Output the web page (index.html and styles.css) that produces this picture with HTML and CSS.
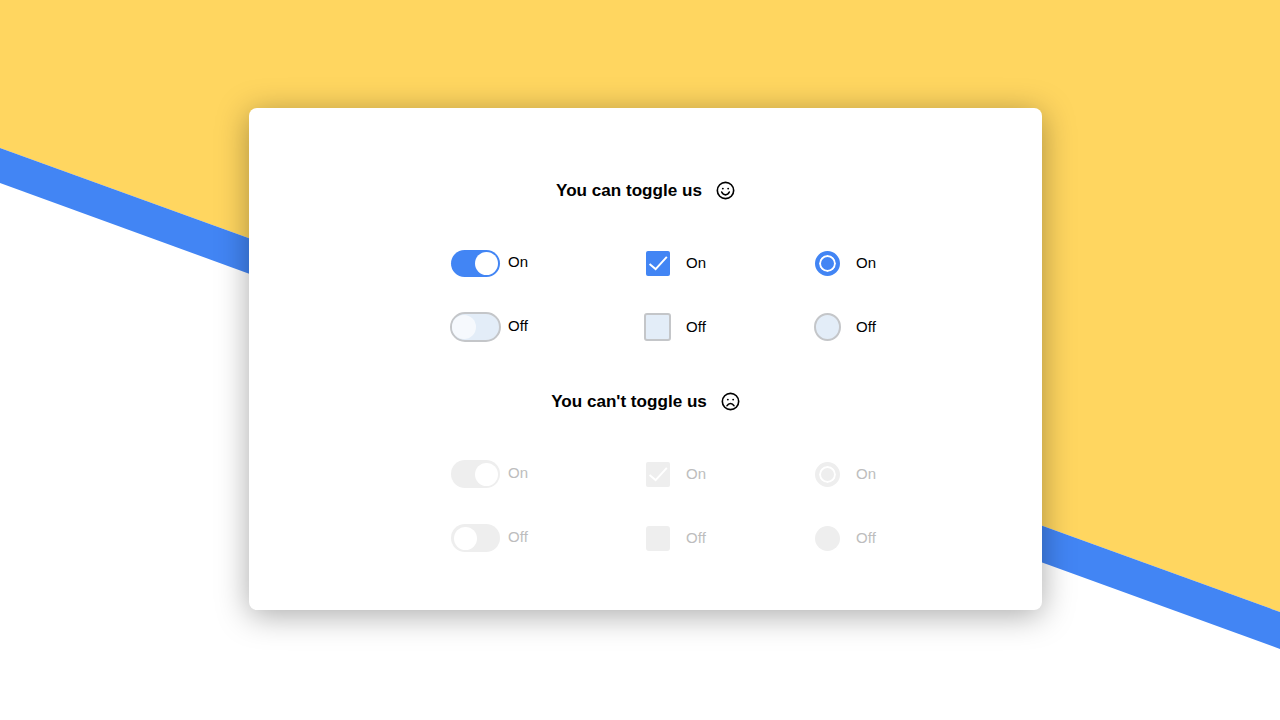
FILE: index.html
```html
<!DOCTYPE html>
<html lang="en">
<head>
<meta charset="utf-8">
<title>Toggles</title>
<link rel="stylesheet" href="styles.css">
</head>
<body>
<svg class="backdrop" viewBox="0 0 1280 720" aria-hidden="true">
  <polygon points="0,0 1280,0 1280,612 0,148" fill="#ffd660"/>
  <polygon points="0,148 1280,612 1280,649 0,183" fill="#4285f4"/>
</svg>
<main class="card">
  <section class="group">
    <h2 class="title">You can toggle us
      <svg class="face" viewBox="0 0 20 20"><circle cx="10" cy="10" r="8.6"/><circle class="eye" cx="7.2" cy="8" r="1"/><circle class="eye" cx="12.8" cy="8" r="1"/><path d="M6 11.6c1 2.1 2.4 3 4 3s3-.9 4-3"/></svg>
    </h2>
    <div class="options">
      <label class="opt opt-toggle"><span class="box"><span class="toggle on"><span class="knob"></span></span></span><span class="text">On</span></label>
      <label class="opt opt-mark"><span class="box"><span class="check on"><svg viewBox="0 0 25 25"><path d="M3.7 13l6.3 5.3L21.7 5.5"/></svg></span></span><span class="text">On</span></label>
      <label class="opt opt-mark"><span class="box"><span class="radio on"></span></span><span class="text">On</span></label>
      <label class="opt opt-toggle"><span class="box"><span class="toggle off"><span class="knob"></span></span></span><span class="text">Off</span></label>
      <label class="opt opt-mark"><span class="box"><span class="check off"></span></span><span class="text">Off</span></label>
      <label class="opt opt-mark"><span class="box"><span class="radio off"></span></span><span class="text">Off</span></label>
    </div>
  </section>
  <section class="group disabled">
    <h2 class="title">You can't toggle us
      <svg class="face" viewBox="0 0 20 20"><circle cx="10" cy="10" r="8.6"/><circle class="eye" cx="7.2" cy="8" r="1"/><circle class="eye" cx="12.8" cy="8" r="1"/><path d="M6.4 14.4c.9-1.6 2.1-2.3 3.6-2.3s2.7.7 3.6 2.3"/></svg>
    </h2>
    <div class="options">
      <label class="opt opt-toggle"><span class="box"><span class="toggle on"><span class="knob"></span></span></span><span class="text">On</span></label>
      <label class="opt opt-mark"><span class="box"><span class="check on"><svg viewBox="0 0 25 25"><path d="M3.7 13l6.3 5.3L21.7 5.5"/></svg></span></span><span class="text">On</span></label>
      <label class="opt opt-mark"><span class="box"><span class="radio on"></span></span><span class="text">On</span></label>
      <label class="opt opt-toggle"><span class="box"><span class="toggle off"><span class="knob"></span></span></span><span class="text">Off</span></label>
      <label class="opt opt-mark"><span class="box"><span class="check off"></span></span><span class="text">Off</span></label>
      <label class="opt opt-mark"><span class="box"><span class="radio off"></span></span><span class="text">Off</span></label>
    </div>
  </section>
</main>
</body>
</html>
```
FILE: styles.css
```css
html, body { margin: 0; height: 720px; overflow: hidden; background: #fff; }
body { position: relative; font-family: "Liberation Sans", Arial, sans-serif; color: #000; padding: 108px 0 0 249px; box-sizing: border-box; }
.backdrop { position: absolute; left: 0; top: 0; width: 1280px; height: 720px; }
.card { position: relative; width: 793px; height: 502px; box-sizing: border-box; padding-top: 71px; background: #fff; border-radius: 8px; box-shadow: 0 5px 32px rgba(0,0,0,.34); }
.group { display: flex; flex-direction: column; align-items: center; }
.group + .group { margin-top: 31px; }
.title { display: flex; align-items: center; gap: 14px; height: 24px; margin: 0; font-size: 17.1px; line-height: 24px; font-weight: 700; }
.face { width: 19px; height: 19px; margin-bottom: 2px; fill: none; stroke: #000; stroke-width: 1.7; stroke-linecap: round; }
.face .eye { fill: #000; stroke: none; }
.options { display: grid; grid-template-columns: 194px 170px 76px; grid-auto-rows: 64px; margin: 28px 0 0 48px; width: 440px; }
.opt { display: flex; align-items: center; height: 64px; font-size: 15px; }
.opt-toggle { gap: 7.6px; }
.opt-toggle .box { width: 51px; }
.opt-toggle .text { padding-bottom: 3px; }
.opt-mark { gap: 15.6px; }
.opt-mark .box { width: 27px; }
.opt-mark .text { padding-bottom: 2px; }
.box { display: flex; align-items: center; justify-content: center; height: 32px; }
.toggle { display: flex; align-items: center; box-sizing: border-box; border-radius: 16px; }
.toggle.on { width: 49px; height: 27px; background: #4285f4; justify-content: flex-end; padding-right: 2px; }
.toggle.off { width: 51px; height: 30px; background: #e3edf8; border: 2px solid #c4c6c9; }
.knob { display: block; border-radius: 50%; background: #fff; }
.toggle.on .knob { width: 23px; height: 23px; }
.toggle.off .knob { width: 24px; height: 24px; background: #f6f9fd; }
.check { display: block; box-sizing: border-box; border-radius: 2px; }
.check svg { display: block; width: 24px; height: 25px; fill: none; stroke: #fff; stroke-width: 2; }
.check.on { width: 24px; height: 25px; margin-left: 1px; background: #4285f4; }
.check.off { width: 27px; height: 28px; background: #e3edf8; border: 2px solid #c4c6c9; border-radius: 3px; }
.radio { display: block; box-sizing: border-box; border-radius: 50%; }
.radio.on { width: 25px; height: 25px; background: #4285f4; border: 4px solid #4285f4; box-shadow: inset 0 0 0 2px #fff; }
.radio.off { width: 27px; height: 28px; background: #e3edf8; border: 2px solid #c4c6c9; }
.disabled .text { color: #bdbdbd; }
.disabled .toggle.on { width: 49px; height: 28px; background: #eee; }
.disabled .toggle.off { width: 49px; height: 28px; background: #eee; border: 0; padding-left: 3px; }
.disabled .toggle .knob { width: 23px; height: 23px; background: #fff; }
.disabled .check.on { background: #eee; }
.disabled .check.off { width: 24px; height: 25px; margin-left: 1px; background: #eee; border: 0; }
.disabled .radio.on, .disabled .radio.off { width: 25px; height: 25px; background: #eee; border: 0; }
.disabled .radio.on { border: 4px solid #eee; }
```
